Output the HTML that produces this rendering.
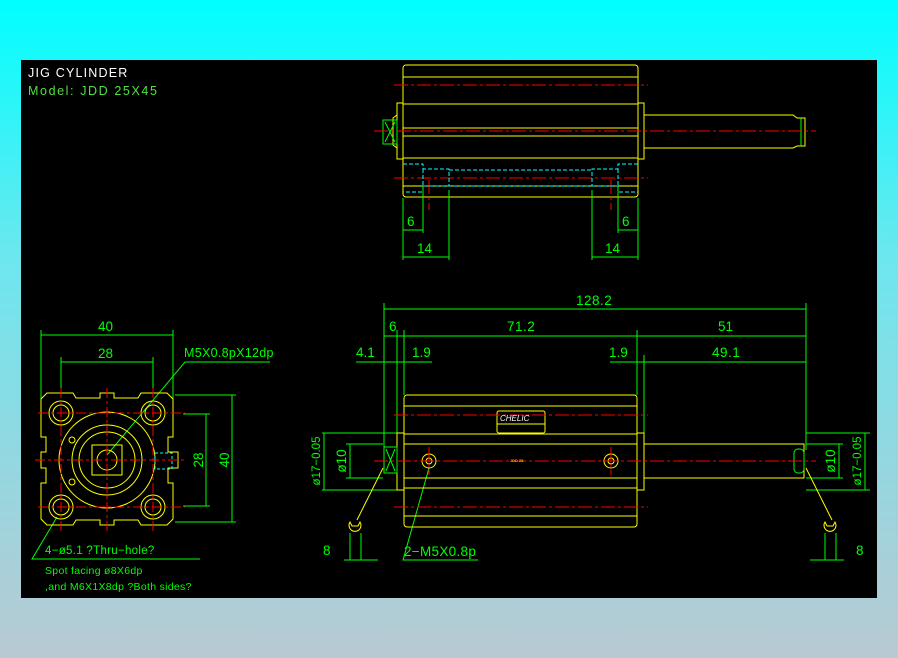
<!DOCTYPE html>
<html><head><meta charset="utf-8"><style>
html,body{margin:0;padding:0;width:898px;height:658px;overflow:hidden;background:linear-gradient(#00ffff 0%,#6fe6ee 40%,#b9c9d2 100%);}
svg{position:absolute;left:0;top:0}
text{font-family:"Liberation Sans",sans-serif;}
</style></head><body>
<svg width="898" height="658" viewBox="0 0 898 658">
<rect x="21" y="60" width="856" height="538" fill="#000"/>
<text x="28" y="77" fill="#fff" font-size="12.5" letter-spacing="1.2">JIG CYLINDER</text>
<text x="28" y="95" fill="#50e040" font-size="12.5" letter-spacing="1.6">Model:  JDD 25X45</text>

<g fill="none" stroke-width="1">
<!-- TOP VIEW -->
<g stroke="#ffff00">
<rect x="403" y="65" width="235" height="132" rx="3"/>
<line x1="403" y1="77" x2="638" y2="77"/><line x1="403" y1="104" x2="638" y2="104"/>
<line x1="403" y1="128" x2="638" y2="128"/><line x1="403" y1="136" x2="638" y2="136"/>
<line x1="403" y1="158" x2="638" y2="158"/><line x1="403" y1="186" x2="638" y2="186"/>
<path d="M403 103 H397 V159 H403"/><path d="M638 103 H644 V159 H638"/>
<path d="M397 115 L393 118 V145 L397 148"/>
<path d="M644 115 H793 L797 118 H805 V146 H797 L793 148 H644"/>
</g>
<g stroke="#00ff00"><rect x="383" y="120" width="14" height="24"/><path d="M385 122 L395 142 M395 122 L385 142"/><line x1="801" y1="118" x2="801" y2="146"/></g>
<g stroke="#ff0000" stroke-dasharray="14 3 3 3">
<line x1="394" y1="85" x2="648" y2="85"/><line x1="374" y1="131" x2="816" y2="131"/><line x1="394" y1="178" x2="648" y2="178"/>
<line x1="429" y1="180" x2="429" y2="210"/><line x1="611" y1="180" x2="611" y2="210"/>
</g>
<g stroke="#00ffff" stroke-dasharray="4 2">
<path d="M403 164 H423 V169 H449 V186"/><path d="M423 169 V192 H403"/>
<path d="M449 170 H592"/><path d="M423 186 H618"/>
<path d="M638 164 H618 V169 H592 V186"/><path d="M618 169 V192 H638"/>
</g>
<g stroke="#00ff00">
<line x1="403" y1="198" x2="403" y2="260"/><line x1="423" y1="186" x2="423" y2="233"/><line x1="449" y1="190" x2="449" y2="260"/>
<line x1="592" y1="190" x2="592" y2="260"/><line x1="618" y1="186" x2="618" y2="233"/><line x1="638" y1="198" x2="638" y2="260"/>
<line x1="403" y1="230" x2="423" y2="230"/><line x1="618" y1="230" x2="638" y2="230"/>
<line x1="403" y1="257" x2="449" y2="257"/><line x1="592" y1="257" x2="638" y2="257"/>
</g>

<!-- END VIEW -->
<g stroke="#00ff00">
<line x1="41" y1="330" x2="41" y2="402"/><line x1="173" y1="330" x2="173" y2="402"/>
<line x1="61" y1="357" x2="61" y2="392"/><line x1="153" y1="357" x2="153" y2="392"/>
<line x1="41" y1="335" x2="173" y2="335"/><line x1="61" y1="362" x2="153" y2="362"/>
<line x1="175" y1="395" x2="236" y2="395"/><line x1="175" y1="522" x2="236" y2="522"/>
<line x1="183" y1="414" x2="210" y2="414"/><line x1="183" y1="506" x2="210" y2="506"/>
<line x1="232" y1="395" x2="232" y2="522"/><line x1="206" y1="414" x2="206" y2="506"/>
<path d="M107 455 L185 362 H270"/>
<path d="M57 517 L32 559 H200"/>
</g>
<g stroke="#ffff00">
<path d="M47 393 H73 L76 398 H100 V393 H114 V398 H138 L141 393 H167 L173 399 V437 H168 V452 H178 V468 H168 V483 H173 V519 L167 525 H141 L138 520 H114 V525 H100 V520 H76 L73 525 H47 L41 519 V483 H46 V468 H41 V452 H46 V437 H41 V399 Z"/>
<circle cx="61" cy="413" r="12"/><circle cx="61" cy="413" r="8"/>
<circle cx="153" cy="413" r="12"/><circle cx="153" cy="413" r="8"/>
<circle cx="61" cy="507" r="12"/><circle cx="61" cy="507" r="8"/>
<circle cx="153" cy="507" r="12"/><circle cx="153" cy="507" r="8"/>
<circle cx="107" cy="460" r="48"/><circle cx="107" cy="460" r="35"/><circle cx="107" cy="460" r="28"/>
<rect x="92" y="445" width="30" height="30"/><circle cx="107" cy="460" r="10"/>
<circle cx="72" cy="440" r="3"/><circle cx="72" cy="482" r="3"/>
</g>
<rect x="155" y="453" width="17" height="16" stroke="#00ffff" stroke-dasharray="3 2"/>
<g stroke="#ff0000" stroke-dasharray="10 3 3 3">
<line x1="35" y1="460" x2="185" y2="460"/><line x1="107" y1="388" x2="107" y2="532"/>
<line x1="38" y1="413" x2="185" y2="413"/><line x1="38" y1="507" x2="185" y2="507"/>
<line x1="61" y1="388" x2="61" y2="532"/><line x1="153" y1="388" x2="153" y2="532"/>
</g>

<!-- SIDE VIEW -->
<g stroke="#00ff00">
<line x1="384" y1="303" x2="384" y2="450"/><line x1="806" y1="303" x2="806" y2="450"/>
<line x1="384" y1="309" x2="806" y2="309"/>
<line x1="397" y1="330" x2="397" y2="435"/><line x1="404" y1="330" x2="404" y2="395"/>
<line x1="637" y1="330" x2="637" y2="395"/><line x1="644" y1="355" x2="644" y2="435"/>
<line x1="384" y1="336" x2="806" y2="336"/>
<line x1="356" y1="362" x2="432" y2="362"/><line x1="610" y1="362" x2="806" y2="362"/>
<path d="M322 433 H397 M322 490 H397 M346 444 H383 M346 478 H383"/>
<line x1="324" y1="433" x2="324" y2="490"/><line x1="350" y1="444" x2="350" y2="478"/>
<path d="M806 433 H870 M806 490 H870 M806 444 H843 M806 478 H843"/>
<line x1="865" y1="433" x2="865" y2="490"/><line x1="839" y1="444" x2="839" y2="478"/>
<path d="M429 468 L403 560 H478"/>
<path d="M350 533 V560 M361 533 V560 M344 560 H378"/>
<path d="M825 533 V560 M836 533 V560 M810 560 H844"/>
</g>
<g stroke="#ffff00">
<rect x="404" y="395" width="233" height="132" rx="3"/>
<line x1="404" y1="406" x2="637" y2="406"/><line x1="404" y1="434" x2="637" y2="434"/>
<line x1="404" y1="444" x2="637" y2="444"/><line x1="404" y1="478" x2="637" y2="478"/>
<line x1="404" y1="488" x2="637" y2="488"/><line x1="404" y1="516" x2="637" y2="516"/>
<path d="M404 433 H397 V490 H404"/><path d="M637 433 H644 V490 H637"/>
<path d="M644 444 H804 V478 H644"/>
<rect x="497" y="411" width="48" height="22" rx="2"/><line x1="497" y1="424" x2="545" y2="424"/>
<circle cx="429" cy="461" r="7"/><circle cx="429" cy="461" r="3"/>
<circle cx="611" cy="461" r="7"/><circle cx="611" cy="461" r="3"/>
<path d="M383 468 L357 520 M806 468 L832 520"/>
<path d="M350 522 a6 6 0 1 0 10 0 l-2 4 h-6 z"/>
<path d="M825 522 a6 6 0 1 0 10 0 l-2 4 h-6 z"/>
</g>
<g stroke="#00ff00"><rect x="384" y="447" width="13" height="26"/><path d="M386 449 L395 471 M395 449 L386 471"/>
<rect x="794" y="449" width="10" height="24" rx="4"/></g>
<g stroke="#ff0000" stroke-dasharray="14 3 3 3">
<line x1="394" y1="415" x2="648" y2="415"/><line x1="374" y1="461" x2="816" y2="461"/><line x1="394" y1="507" x2="648" y2="507"/>
<line x1="429" y1="447" x2="429" y2="475"/><line x1="611" y1="447" x2="611" y2="475"/>
</g>
</g>

<g fill="#00ff00" font-size="13.5">
<text x="407" y="226">6</text><text x="622" y="226">6</text>
<text x="417" y="253">14</text><text x="605" y="253">14</text>
<text x="98" y="331">40</text><text x="98" y="358">28</text>
<text x="184" y="357" font-size="12.5" letter-spacing="0.3">M5X0.8pX12dp</text>
<text transform="translate(203,460) rotate(-90)" text-anchor="middle">28</text>
<text transform="translate(229,460) rotate(-90)" text-anchor="middle">40</text>
<text x="45" y="554" font-size="11.5" letter-spacing="0.3">4−ø5.1 ?Thru−hole?</text>
<text x="45" y="574" font-size="10.5" letter-spacing="0.3">Spot facing  ø8X6dp</text>
<text x="45" y="590" font-size="10.5" letter-spacing="0.3">,and M6X1X8dp ?Both sides?</text>
<text x="576" y="305" letter-spacing="0.5">128.2</text>
<text x="389" y="331">6</text><text x="507" y="331" letter-spacing="0.5">71.2</text><text x="718" y="331">51</text>
<text x="356" y="357">4.1</text><text x="412" y="357">1.9</text><text x="609" y="357">1.9</text><text x="712" y="357" letter-spacing="0.5">49.1</text>
<text transform="translate(346,461) rotate(-90)" text-anchor="middle">ø10</text>
<text transform="translate(320,461) rotate(-90)" text-anchor="middle" font-size="11.5">ø17−0.05</text>
<text transform="translate(835,461) rotate(-90)" text-anchor="middle">ø10</text>
<text transform="translate(861,461) rotate(-90)" text-anchor="middle" font-size="11.5">ø17−0.05</text>
<text x="323" y="555">8</text><text x="856" y="555">8</text>
<text x="404" y="556" letter-spacing="0.3">2−M5X0.8p</text>
</g>
<text x="500" y="421" fill="#fff" font-size="8" font-style="italic">CHELIC</text>
<text x="510" y="462" fill="#ffff00" font-size="4">JDD 25</text>
</svg>
</body></html>
